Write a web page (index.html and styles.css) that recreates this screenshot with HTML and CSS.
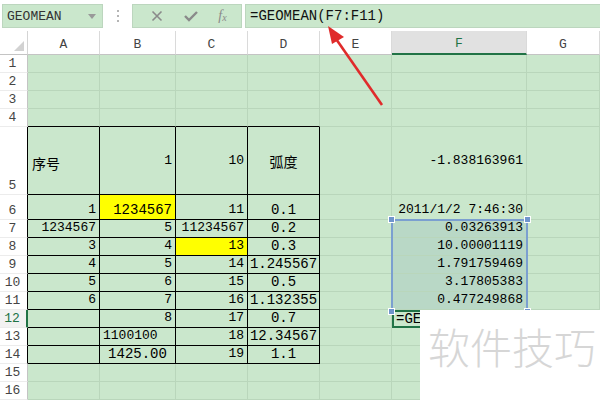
FILE: index.html
```html
<!DOCTYPE html>
<html>
<head>
<meta charset="utf-8">
<link rel="stylesheet" href="styles.css">
</head>
<body>
<div class="app">
  <div class="toolbar">
    <div class="namebox"><span>GEOMEAN</span><span class="dd"></span></div>
    <div class="dots"><i></i><i></i><i></i></div>
    <div class="btns">
      <svg class="ico" width="12" height="12" viewBox="0 0 12 12"><path d="M1.5 1.5 L10.5 10.5 M10.5 1.5 L1.5 10.5" stroke="#8a8a8a" stroke-width="1.6" fill="none"/></svg>
      <svg class="ico" width="14" height="12" viewBox="0 0 14 12"><path d="M1 6 L5 10 L13 2" stroke="#8a8a8a" stroke-width="2.4" fill="none"/></svg>
      <span class="fx">f<sub>x</sub></span>
    </div>
    <div class="formula">=GEOMEAN(F7:F11)</div>
  </div>

  <div class="sheet">
    <!-- header -->
    <div class="corner"><span class="tri"></span></div>
    <div class="hd">A</div><div class="hd">B</div><div class="hd">C</div><div class="hd">D</div><div class="hd">E</div><div class="hd on">F</div><div class="hd">G</div>
    <!-- 1 -->
    <div class="rh">1</div><div class="c"></div><div class="c"></div><div class="c"></div><div class="c"></div><div class="c"></div><div class="c"></div><div class="c"></div>
    <!-- 2 -->
    <div class="rh">2</div><div class="c"></div><div class="c"></div><div class="c"></div><div class="c"></div><div class="c"></div><div class="c"></div><div class="c"></div>
    <!-- 3 -->
    <div class="rh">3</div><div class="c"></div><div class="c"></div><div class="c"></div><div class="c"></div><div class="c"></div><div class="c"></div><div class="c"></div>
    <!-- 4 -->
    <div class="rh">4</div><div class="c tt"></div><div class="c tt"></div><div class="c tt"></div><div class="c tt"></div><div class="c"></div><div class="c"></div><div class="c"></div>
    <!-- 5 -->
    <div class="rh tl">5</div><div class="c t l mid cjk">序号</div><div class="c t r mid">1</div><div class="c t r mid">10</div><div class="c t ctr mid cjk">弧度</div><div class="c"></div><div class="c r mid">-1.838163961</div><div class="c"></div>
    <!-- 6 -->
    <div class="rh tl">6</div><div class="c t r">1</div><div class="c t r y big">1234567</div><div class="c t r">11</div><div class="c t ctr">0.1</div><div class="c"></div><div class="c r">2011/1/2 7:46:30</div><div class="c"></div>
    <!-- 7 -->
    <div class="rh tl">7</div><div class="c t r">1234567</div><div class="c t r">5</div><div class="c t r">11234567</div><div class="c t ctr">0.2</div><div class="c"></div><div class="c r s">0.03263913</div><div class="c"></div>
    <!-- 8 -->
    <div class="rh tl">8</div><div class="c t r">3</div><div class="c t r">4</div><div class="c t r y">13</div><div class="c t ctr">0.3</div><div class="c"></div><div class="c r s">10.00001119</div><div class="c"></div>
    <!-- 9 -->
    <div class="rh tl">9</div><div class="c t r">4</div><div class="c t r">5</div><div class="c t r">14</div><div class="c t ctr">1.245567</div><div class="c"></div><div class="c r s">1.791759469</div><div class="c"></div>
    <!-- 10 -->
    <div class="rh tl">10</div><div class="c t r">5</div><div class="c t r">6</div><div class="c t r">15</div><div class="c t ctr">0.5</div><div class="c"></div><div class="c r s">3.17805383</div><div class="c"></div>
    <!-- 11 -->
    <div class="rh tl">11</div><div class="c t r">6</div><div class="c t r">7</div><div class="c t r">16</div><div class="c t ctr">1.132355</div><div class="c"></div><div class="c r s">0.477249868</div><div class="c"></div>
    <!-- 12 -->
    <div class="rh tl on">12</div><div class="c t"></div><div class="c t r">8</div><div class="c t r">17</div><div class="c t ctr mark">0.7</div><div class="c"></div><div class="c act">=GEO</div><div class="c"></div>
    <!-- 13 -->
    <div class="rh tl">13</div><div class="c t"></div><div class="c t l">1100100</div><div class="c t r">18</div><div class="c t ctr">12.34567</div><div class="c"></div><div class="c"></div><div class="c"></div>
    <!-- 14 -->
    <div class="rh tl">14</div><div class="c t"></div><div class="c t ctr">1425.00</div><div class="c t r">19</div><div class="c t ctr">1.1</div><div class="c"></div><div class="c"></div><div class="c"></div>
    <!-- 15 -->
    <div class="rh">15</div><div class="c"></div><div class="c"></div><div class="c"></div><div class="c"></div><div class="c"></div><div class="c"></div><div class="c"></div>
    <!-- 16 -->
    <div class="rh">16</div><div class="c"></div><div class="c"></div><div class="c"></div><div class="c"></div><div class="c"></div><div class="c"></div><div class="c"></div>
  </div>

  <div class="selection"><i class="h tl1"></i><i class="h tr1"></i><i class="h bl1"></i><i class="h br1"></i></div>

  <div class="watermark">软件技巧</div>

  <svg class="arrow" width="70" height="90" viewBox="0 0 70 90">
    <line x1="62" y1="83" x2="14" y2="14" stroke="#e02b2b" stroke-width="2.6"/>
    <polygon points="8,4 24,15 12,22" fill="#e02b2b"/>
  </svg>
</div>
</body>
</html>
```

FILE: styles.css
```css
html, body { margin: 0; padding: 0; background: #fff; }
.app {
  position: relative;
  width: 600px;
  height: 400px;
  overflow: hidden;
  font-family: "Liberation Mono", "Noto Sans CJK SC", monospace;
  font-size: 13px;
  color: #000;
}
.toolbar {
  height: 31px;
  display: flex;
  align-items: flex-start;
  padding-top: 4px;
  box-sizing: border-box;
  background: #fff;
}
.namebox {
  width: 101px;
  height: 24px;
  margin-left: 2px;
  box-sizing: border-box;
  background: #cae7cc;
  border: 1px solid #bcd6be;
  display: flex;
  align-items: center;
  justify-content: space-between;
  padding: 0 6px 0 4px;
  color: #333;
  font-size: 13px;
}
.dd {
  width: 0; height: 0;
  border-left: 4px solid transparent;
  border-right: 4px solid transparent;
  border-top: 5px solid #999;
}
.dots {
  width: 29px;
  height: 24px;
  display: flex;
  flex-direction: column;
  align-items: center;
  justify-content: center;
  gap: 3px;
}
.dots i { display: block; width: 2px; height: 2px; background: #b5b5b5; }
.btns {
  width: 110px;
  height: 24px;
  box-sizing: border-box;
  background: #cae7cc;
  border: 1px solid #bcd6be;
  display: flex;
  align-items: center;
  justify-content: space-around;
  padding: 0 4px 0 8px;
}
.fx {
  font-family: "Liberation Serif", serif;
  font-style: italic;
  color: #8a8a8a;
  font-size: 14px;
}
.fx sub { font-size: 10px; vertical-align: -1px; }
.formula {
  flex: 1;
  margin-left: 3px;
  height: 24px;
  box-sizing: border-box;
  background: #cae7cc;
  border: 1px solid #bcd6be;
  border-right: none;
  padding-left: 4px;
  line-height: 22px;
  font-size: 14px;
  color: #111;
}

.sheet {
  display: grid;
  grid-template-columns: 28px 72px 76px 72px 72px 72px 135px 73px;
  grid-template-rows: 24px repeat(4, 18px) 68px 25px repeat(10, 18px);
}
.corner {
  position: relative;
  border-right: 1px solid #d4d4d4;
  border-bottom: 1px solid #c4c4c4;
}
.tri {
  position: absolute;
  right: 3px;
  bottom: 3px;
  width: 0; height: 0;
  border-left: 10px solid transparent;
  border-bottom: 10px solid #d2d2d2;
}
.hd {
  box-sizing: border-box;
  background: #fff;
  border-right: 1px solid #dadada;
  border-bottom: 1px solid #c4c4c4;
  display: flex;
  align-items: flex-end;
  justify-content: center;
  padding-bottom: 2px;
  color: #444;
  font-size: 13px;
}
.hd.on {
  background: #e1e1e1;
  border-bottom: 2px solid #217346;
  color: #217346;
}
.rh {
  box-sizing: border-box;
  background: #fff;
  border-right: 1px solid #c4c4c4;
  border-bottom: 1px solid #ececec;
  display: flex;
  align-items: flex-end;
  justify-content: center;
  padding-right: 2px;
  color: #444;
  font-size: 13px;
  line-height: 16px;
}
.rh.tl { border-right-color: #000; }
.rh.on { border-right: 2px solid #217346; color: #217346; background: #f2f2f2; }

.c {
  box-sizing: border-box;
  background: #cae7cc;
  border-right: 1px solid #b9d6bb;
  border-bottom: 1px solid #b9d6bb;
  display: flex;
  align-items: flex-end;
  padding: 0 3px 1px 3px;
  white-space: nowrap;
  line-height: 16px;
  overflow: visible;
}
.c.t { border-right-color: #000; border-bottom-color: #000; }
.c.tt { border-bottom-color: #000; }
.c.r { justify-content: flex-end; }
.c.l { justify-content: flex-start; }
.c.ctr { justify-content: center; font-size: 14px; }
.c.mid { align-items: center; padding-bottom: 0; }
.c.cjk { font-family: "Noto Sans CJK SC", sans-serif; font-size: 14px; }
.c.l.cjk { padding-left: 4px; padding-top: 4px; }
.c.y { background: #ffff00; }
.c.big { font-size: 14px; }
.c.s { background: #b9d8c6; border-right-color: #b9d8c6; }
.c.mark { box-shadow: 2px 0 0 #f0a070; }
.c.act {
  border: 2px solid #217346;
  padding-left: 2px;
  font-size: 14px;
  align-items: center;
  padding-bottom: 0;
}

.selection {
  position: absolute;
  left: 391px;
  top: 219px;
  width: 137px;
  height: 92px;
  box-sizing: border-box;
  border: 2px solid #7b9fd0;
  border-bottom: none;
}
.selection .h {
  position: absolute;
  width: 5px;
  height: 5px;
  background: #6f95cc;
  border: 1px solid #fff;
}
.tl1 { left: -5px; top: -5px; }
.tr1 { right: -5px; top: -5px; }
.bl1 { left: -5px; bottom: -4px; }
.br1 { right: -5px; bottom: -4px; }

.watermark {
  position: absolute;
  left: 420px;
  top: 310px;
  width: 180px;
  height: 90px;
  background: #fff;
  box-sizing: border-box;
  padding: 12px 0 0 8px;
  font-family: "Noto Sans CJK SC", sans-serif;
  font-weight: 300;
  font-size: 42px;
  line-height: 48px;
  color: #d6d6d6;
  white-space: nowrap;
}
.arrow {
  position: absolute;
  left: 320px;
  top: 22px;
}
```
